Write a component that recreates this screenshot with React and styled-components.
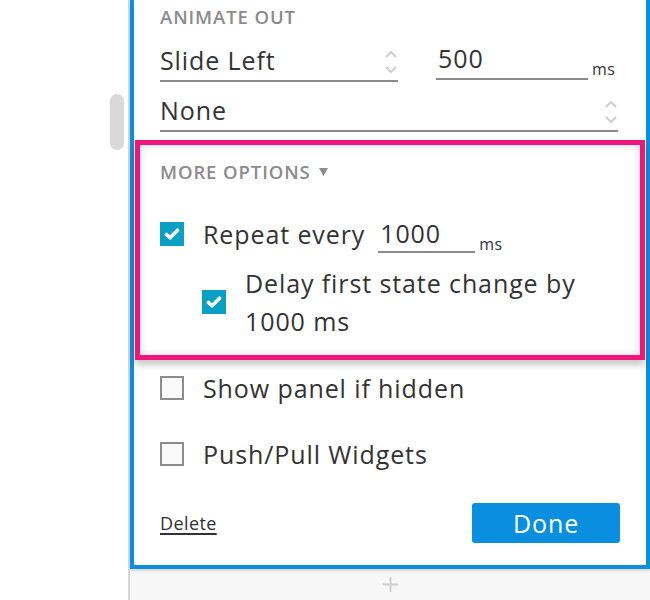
import React from 'react';
import styled, { createGlobalStyle } from 'styled-components';

const GlobalStyle = createGlobalStyle`
  html, body {
    margin: 0;
    padding: 0;
    background: #fff;
  }
  body {
    font-family: "Open Sans", Lato, sans-serif;
    color: #333;
  }
`;

const Page = styled.div`
  display: flex;
  height: 600px;
  overflow: hidden;
`;

const Sidebar = styled.div`
  width: 130px;
  flex: none;
  border-right: 2px solid #d6d6d6;
  display: flex;
  flex-direction: column;
  align-items: flex-end;
  padding-top: 94px;
  box-sizing: border-box;
`;

const ScrollThumb = styled.div`
  width: 14px;
  height: 56px;
  margin-right: 4px;
  border-radius: 7px;
  background: #d9d9d9;
`;

const Main = styled.div`
  flex: 1;
  display: flex;
  flex-direction: column;
  background: #f7f7f7;
`;

const Panel = styled.div`
  background: #fff;
  border: 4px solid #0a8fe0;
  border-top: none;
  padding: 6px 26px 22px 26px;
  box-shadow: 0 2px 3px rgba(0, 0, 0, 0.08);
`;

const SectionLabel = styled.div`
  font-size: 18.5px;
  font-weight: 600;
  letter-spacing: 0.9px;
  color: #8b8b8b;
  text-transform: uppercase;
  line-height: 22px;
  display: flex;
  align-items: center;
  gap: 8px;
`;

const Row = styled.div`
  display: flex;
  align-items: flex-end;
`;

const Select = styled.div`
  display: flex;
  align-items: flex-end;
  justify-content: space-between;
  width: ${p => (p.$width ? `${p.$width}px` : 'auto')};
  flex: ${p => (p.$width ? 'none' : 1)};
  height: ${p => p.$height || 54}px;
  border-bottom: 2px solid #8a8a8a;
  font-size: 25px;
  letter-spacing: 0.9px;
  color: #333;
  box-sizing: border-box;
  padding-bottom: 3px;
  margin-right: ${p => p.$trim || 0}px;

  svg {
    margin-bottom: 1px;
  }
`;

const Field = styled.div`
  width: ${p => p.$width}px;
  margin-left: ${p => p.$gap || 0}px;
  height: ${p => p.$height || 52}px;
  margin-bottom: ${p => p.$lift || 0}px;
  display: flex;
  align-items: ${p => (p.$center ? 'center' : 'flex-end')};
  border-bottom: 2px solid #8a8a8a;
  font-size: 25px;
  letter-spacing: 0.9px;
  color: #333;
  box-sizing: border-box;
  padding-left: 2px;
  padding-bottom: ${p => (p.$center ? 0 : 3)}px;
`;

const Unit = styled.span`
  font-size: 16px;
  line-height: 16px;
  letter-spacing: 0.5px;
  color: #333;
  margin-left: 4px;
  margin-bottom: ${p => p.$lift || 1}px;
`;

const Highlight = styled.div`
  margin: 8px -25px 0;
  border: 5px solid #f0157c;
  padding: 16px 20px 15px;
  box-shadow: 0 5px 7px rgba(0, 0, 0, 0.22), inset 0 0 8px rgba(0, 0, 0, 0.16);
`;

const Options = styled.div`
  display: flex;
  flex-direction: column;
  gap: ${p => p.$gap || 0}px;
  margin-top: ${p => p.$top || 0}px;
  padding-left: ${p => p.$indent || 0}px;
`;

const CheckRow = styled.label`
  display: flex;
  align-items: center;
  gap: 19px;
  font-size: 25px;
  letter-spacing: 0.9px;
  line-height: 38px;
  color: #333;
`;

const Text = styled.span`
  max-width: ${p => (p.$max ? `${p.$max}px` : 'none')};
`;

const Box = styled.span`
  flex: none;
  width: 24px;
  height: 24px;
  box-sizing: border-box;
  display: flex;
  align-items: center;
  justify-content: center;
  background: ${p => (p.$checked ? '#0aa0c6' : '#fafafa')};
  border: ${p => (p.$checked ? 'none' : '2px solid #8c8c8c')};
`;

const InlineField = styled.span`
  display: inline-flex;
  align-items: flex-end;
  margin-left: -6px;
`;

const Footer = styled.div`
  display: flex;
  align-items: center;
  justify-content: space-between;
  margin-top: 30px;
`;

const DeleteLink = styled.a`
  font-size: 18px;
  letter-spacing: 0.4px;
  color: #333;
  text-decoration: underline;
  text-underline-offset: 3px;
  text-decoration-thickness: 2px;
`;

const DoneButton = styled.button`
  width: 148px;
  height: 40px;
  border: none;
  border-radius: 3px;
  background: #0a8fe0;
  color: #fff;
  font-family: inherit;
  font-size: 25px;
  letter-spacing: 0.9px;
  line-height: 40px;
  padding: 0;
`;

const AddBar = styled.div`
  flex: 1;
  display: flex;
  justify-content: center;
  align-items: center;
  box-shadow: inset 0 3px 3px -2px rgba(0, 0, 0, 0.08);
`;

function Chevrons() {
  return (
    <svg width="14" height="28" viewBox="0 0 14 28" fill="none" stroke="#cfcfcf" strokeWidth="2">
      <polyline points="2,9 7,4 12,9" />
      <polyline points="2,19 7,24 12,19" />
    </svg>
  );
}

function Caret() {
  return (
    <svg width="9" height="8" viewBox="0 0 9 8">
      <polygon points="0,0 9,0 4.5,8" fill="#8b8b8b" />
    </svg>
  );
}

function Check({ checked }) {
  return (
    <Box $checked={checked}>
      {checked && (
        <svg width="16" height="14" viewBox="0 0 16 14">
          <path d="M2.5 7.5 L6 10.8 L13.5 3.2" fill="none" stroke="#fff" strokeWidth="3.6" strokeLinecap="round" strokeLinejoin="round" />
        </svg>
      )}
    </Box>
  );
}

function Plus() {
  return (
    <svg width="15" height="15" viewBox="0 0 15 15" stroke="#cfcfcf" strokeWidth="2">
      <line x1="7.5" y1="0" x2="7.5" y2="15" />
      <line x1="0" y1="7.5" x2="15" y2="7.5" />
    </svg>
  );
}

export default function App() {
  return (
    <>
      <GlobalStyle />
      <Page>
        <Sidebar>
          <ScrollThumb />
        </Sidebar>
        <Main>
          <Panel>
            <SectionLabel>Animate out</SectionLabel>
            <Row>
              <Select $width={238}>
                <span>Slide Left</span>
                <Chevrons />
              </Select>
              <Field $width={152} $gap={38} $lift={2}>500</Field>
              <Unit $lift={5}>ms</Unit>
            </Row>
            <Row>
              <Select $height={50} $trim={2}>
                <span>None</span>
                <Chevrons />
              </Select>
            </Row>
            <Highlight>
              <SectionLabel>
                More options <Caret />
              </SectionLabel>
              <Options $top={32} $gap={11}>
                <CheckRow>
                  <Check checked />
                  <Text>Repeat every</Text>
                  <InlineField>
                    <Field $width={97} $height={38} $center>1000</Field>
                    <Unit>ms</Unit>
                  </InlineField>
                </CheckRow>
                <Options $indent={42}>
                  <CheckRow>
                    <Check checked />
                    <Text $max={345}>Delay first state change by 1000 ms</Text>
                  </CheckRow>
                </Options>
              </Options>
            </Highlight>
            <Options $top={9} $gap={28}>
              <CheckRow>
                <Check />
                <Text>Show panel if hidden</Text>
              </CheckRow>
              <CheckRow>
                <Check />
                <Text>Push/Pull Widgets</Text>
              </CheckRow>
            </Options>
            <Footer>
              <DeleteLink>Delete</DeleteLink>
              <DoneButton>Done</DoneButton>
            </Footer>
          </Panel>
          <AddBar>
            <Plus />
          </AddBar>
        </Main>
      </Page>
    </>
  );
}
